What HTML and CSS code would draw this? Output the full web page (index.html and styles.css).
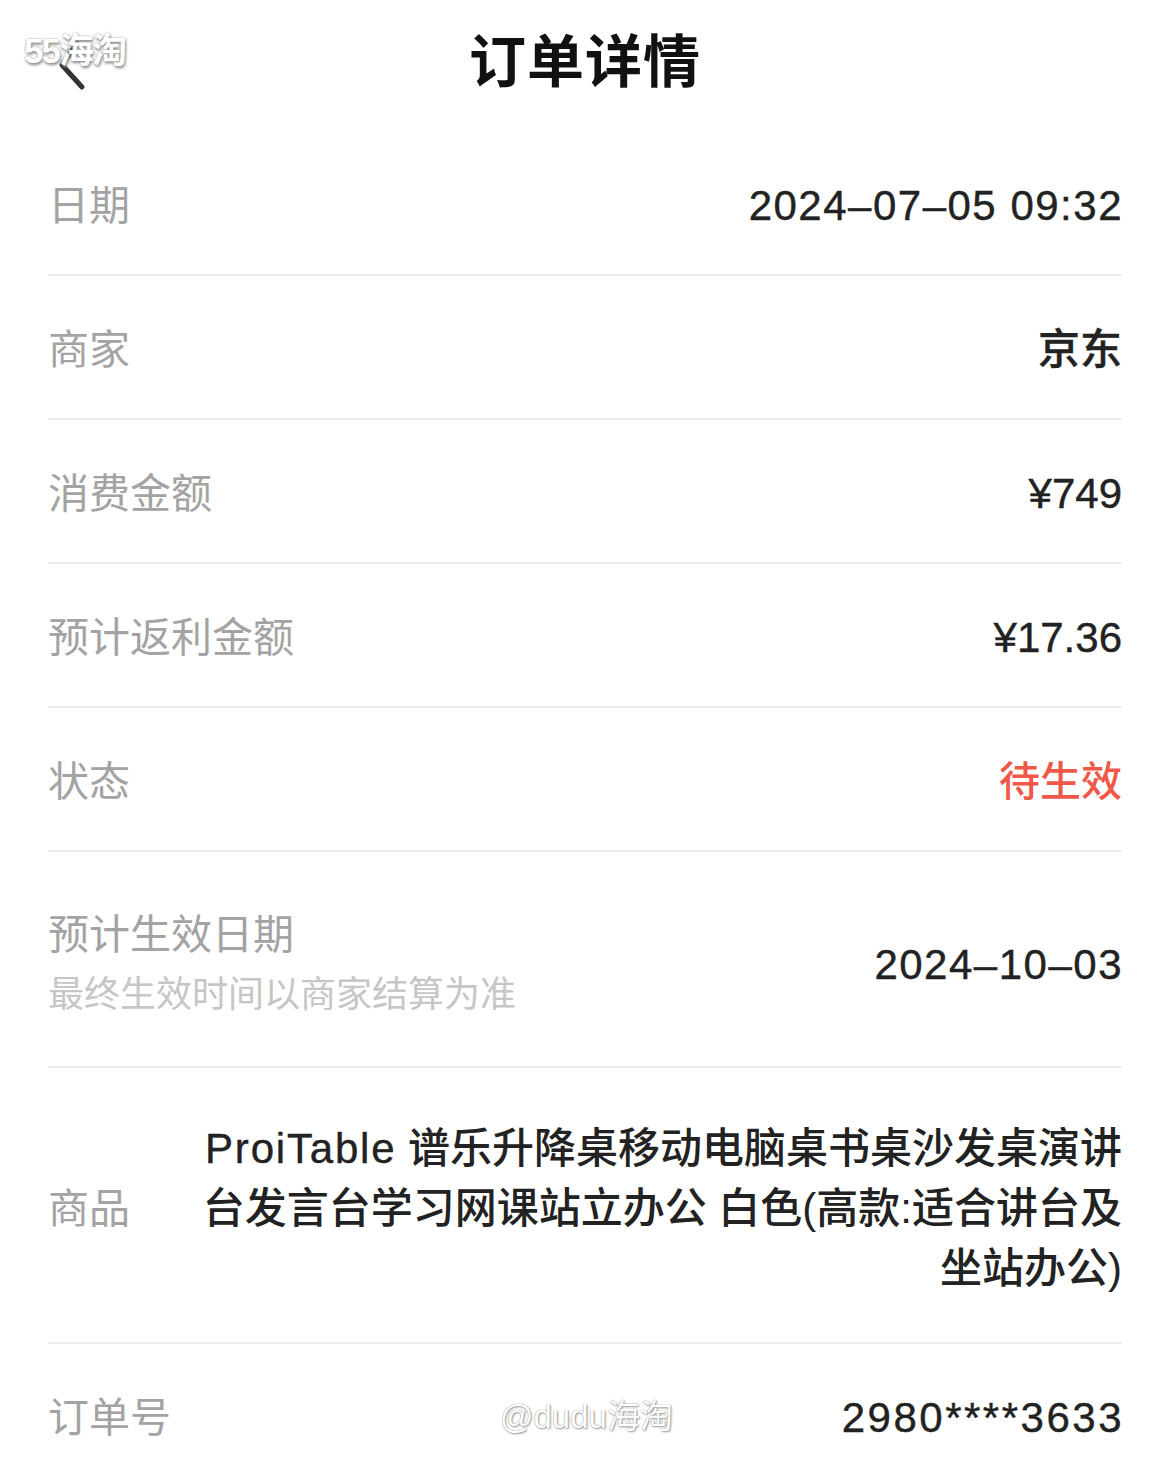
FILE: index.html
```html
<!DOCTYPE html>
<html>
<head>
    <meta charset="utf-8">
    <title>订单详情</title>
    <link rel="stylesheet" href="styles.css">
</head>
<body>
    <div class="page">
        <div class="header">
            <a class="back" href="#">
                <svg width="40" height="60" viewBox="0 0 40 60">
                    <path d="M27 11 L12 33 L32 55" fill="none" stroke="#333" stroke-width="5" stroke-linecap="round" stroke-linejoin="round"/>
                </svg>
            </a>
            <h1>订单详情</h1>
        </div>

        <div class="list">
            <div class="row">
                <div class="label">日期</div>
                <div class="value date">2024–07–05 09:32</div>
            </div>
            <div class="row">
                <div class="label">商家</div>
                <div class="value">京东</div>
            </div>
            <div class="row">
                <div class="label">消费金额</div>
                <div class="value">¥749</div>
            </div>
            <div class="row">
                <div class="label">预计返利金额</div>
                <div class="value">¥17.36</div>
            </div>
            <div class="row">
                <div class="label">状态</div>
                <div class="value status">待生效</div>
            </div>
            <div class="row tall">
                <div class="label-group">
                    <div class="label">预计生效日期</div>
                    <div class="sub">最终生效时间以商家结算为准</div>
                </div>
                <div class="value date">2024–10–03</div>
            </div>
            <div class="row goods">
                <div class="label">商品</div>
                <div class="value goods-name"><span class="brand">ProiTable</span> 谱乐升降桌移动电脑桌书桌沙发桌演讲台发言台学习网课站立办公 白色(高款:适合讲台及坐站办公)</div>
            </div>
            <div class="row">
                <div class="label">订单号</div>
                <div class="value order-no">2980****3633</div>
            </div>
        </div>

        <div class="mark mark-top">55海淘</div>
        <div class="mark mark-bottom">@dudu海淘</div>
    </div>
</body>
</html>
```

FILE: styles.css
```css
body {
    margin: 0;
    background-color: #fff;
    font-family: "Liberation Sans", "Noto Sans CJK SC", sans-serif;
    color: #222;
}

.page {
    position: relative;
    width: 1170px;
    height: 1463px;
    overflow: hidden;
}

.header {
    position: relative;
    height: 132px;
    display: flex;
    align-items: center;
    justify-content: center;
}

.header h1 {
    margin: 0 0 8px 0;
    font-size: 57px;
    font-weight: bold;
    line-height: 1;
    color: #111;
    letter-spacing: 1px;
}

.back {
    position: absolute;
    left: 50px;
    top: 32px;
    display: block;
}

.list {
    padding: 0 48px 0 48px;
}

.row {
    height: 144px;
    box-sizing: border-box;
    padding-top: 6px;
    border-bottom: 2px solid #ececec;
    display: flex;
    align-items: center;
    justify-content: space-between;
}

.label {
    font-size: 41px;
    line-height: 60px;
    color: #a3a3a3;
}

.value {
    font-size: 42px;
    line-height: 60px;
    font-weight: 500;
    color: #222;
    text-align: right;
    -webkit-text-stroke: 0.4px #222;
}

.date {
    letter-spacing: 1.5px;
    margin-right: -1px;
}

.order-no {
    letter-spacing: 2.5px;
    margin-right: -2px;
}

.status {
    color: #f0594a;
    font-size: 41px;
    -webkit-text-stroke: 0;
}

.row.tall {
    height: 216px;
    padding-top: 12px;
}

.sub {
    font-size: 36px;
    line-height: 60px;
    color: #c6c6c6;
}

.row.goods {
    height: 276px;
    padding-top: 8px;
}

.goods-name {
    width: 924px;
    font-size: 42px;
    -webkit-text-stroke: 0;
}

.brand {
    letter-spacing: 1.8px;
    -webkit-text-stroke: 0.4px #222;
}

.mark {
    position: absolute;
    color: #fff;
    font-weight: bold;
    text-shadow: 0 0 2px #999, 1px 2px 3px #888;
}

.mark-top {
    left: 24px;
    top: 22px;
    font-size: 35px;
    letter-spacing: -2px;
}

.mark-bottom {
    left: 500px;
    top: 1390px;
    font-size: 33px;
    font-weight: normal;
    text-shadow: 0 0 1px #777, 1px 1px 2px #999;
}
```
